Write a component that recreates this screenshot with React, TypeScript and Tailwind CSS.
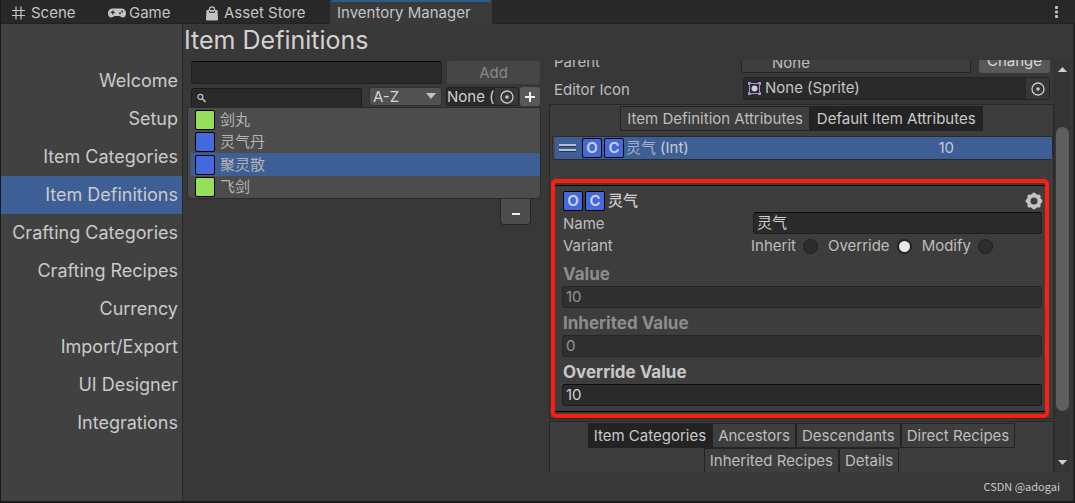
import { useState } from "react";

const menuItems = [
    "Welcome",
    "Setup",
    "Item Categories",
    "Item Definitions",
    "Crafting Categories",
    "Crafting Recipes",
    "Currency",
    "Import/Export",
    "UI Designer",
    "Integrations",
];

const items = [
    { name: "剑丸", color: "bg-[#95df5b]" },
    { name: "灵气丹", color: "bg-[#4369dc]" },
    { name: "聚灵散", color: "bg-[#4369dc]" },
    { name: "飞剑", color: "bg-[#95df5b]" },
];

const variants = ["Inherit", "Override", "Modify"];

function PickerIcon() {
    return (
        <svg width="14" height="14" viewBox="0 0 14 14" fill="none" className="shrink-0">
            <circle cx="7" cy="7" r="6" stroke="#c8c8c8" strokeWidth="1.3" />
            <circle cx="7" cy="7" r="1.8" fill="#c8c8c8" />
        </svg>
    );
}

function GearIcon() {
    return (
        <svg width="18" height="18" viewBox="0 0 18 18" fill="#c4c4c4">
            <circle cx="9" cy="9" r="5.4" fill="none" stroke="#c4c4c4" strokeWidth="3.8" />
            <circle cx="9" cy="2.4" r="1.9" />
            <circle cx="13.7" cy="4.3" r="1.9" />
            <circle cx="15.6" cy="9" r="1.9" />
            <circle cx="13.7" cy="13.7" r="1.9" />
            <circle cx="9" cy="15.6" r="1.9" />
            <circle cx="4.3" cy="13.7" r="1.9" />
            <circle cx="2.4" cy="9" r="1.9" />
            <circle cx="4.3" cy="4.3" r="1.9" />
        </svg>
    );
}

function Badge({ letter }: { letter: string }) {
    return (
        <span className="flex h-5 w-5 shrink-0 items-center justify-center rounded-[2px] border border-black bg-[#4369dc] text-[15px] font-semibold text-[#d0d4e4]">
            {letter}
        </span>
    );
}

function SectionTab({ label, active, wide }: { label: string; active?: boolean; wide?: boolean }) {
    return (
        <button
            className={`h-[25px] border border-[#232323] text-[15px] leading-5 whitespace-nowrap ${wide ? "px-[6px]" : "px-[5px]"} ${active ? "bg-[#232323] text-[#cacaca]" : "bg-[#3e3e3e] text-[#bdbdbd]"}`}
        >
            {label}
        </button>
    );
}

function ValueField({ id, label, value, disabled }: { id: string; label: string; value: string; disabled?: boolean }) {
    return (
        <div className="flex flex-col">
            <label htmlFor={id} className={`flex h-[27px] items-end pl-px text-[17px] leading-6 font-bold ${disabled ? "text-[#8e8e8e]" : "text-[#c8c8c8]"}`}>
                {label}
            </label>
            <input
                id={id}
                defaultValue={value}
                disabled={disabled}
                className={`h-[22px] w-full rounded-[3px] border px-[3px] pt-px text-[15px] ${disabled ? "border-[#252525] bg-[#303030] text-[#949494]" : "border-[#1c1c1c] border-t-[#0d0d0d] bg-[#2a2a2a] text-[#d0d0d0]"}`}
            />
        </div>
    );
}

function TabBar() {
    return (
        <div className="flex h-6 shrink-0 items-stretch border-b border-[#222] bg-[#282828] text-[15px] text-[#c4c4c4]">
            <button className="flex w-[95px] items-center gap-[6px] pt-[3px] pl-[11px]">
                <svg width="13" height="14" viewBox="0 0 13 14" fill="none" stroke="#c4c4c4" strokeWidth="1.2">
                    <path d="M4 0.5v13M9 0.5v13M0 4.5h13M0 9.5h13" />
                </svg>
                Scene
            </button>
            <button className="flex w-[98px] items-center gap-[3px] pt-[3px] pl-3">
                <svg width="18" height="10" viewBox="0 0 18 10">
                    <path d="M5 0.5C2 0.5 0 2.6 0 5.2C0 8 1.5 9.6 3.2 9.6C5 9.6 5.7 8 6.8 8h4.4c1.1 0 1.8 1.6 3.6 1.6C16.5 9.6 18 8 18 5.2C18 2.6 16 0.5 13 0.5z" fill="#c4c4c4" />
                    <path d="M4.8 2.4v4M2.8 4.4h4" stroke="#282828" strokeWidth="1.2" />
                    <circle cx="12" cy="5.2" r="1" fill="#282828" />
                    <circle cx="14.2" cy="3.4" r="1" fill="#282828" />
                </svg>
                Game
            </button>
            <button className="flex w-[136px] items-center gap-[6px] pt-[3px] pl-3">
                <svg width="12" height="15" viewBox="0 0 12 15">
                    <path d="M3.5 6V3a2.5 2.2 0 0 1 5 0v3" fill="none" stroke="#c4c4c4" strokeWidth="1.3" />
                    <path d="M0.5 4h11l0.5 9.5q0 1-1 1H1q-1 0-1-1z" fill="#c4c4c4" />
                    <path d="M3.5 5v1.300h5V5" fill="none" stroke="#282828" />
                </svg>
                Asset Store
            </button>
            <button className="-mb-px flex w-[162px] items-center rounded-t-[3px] border-t-2 border-[#2c5d87] bg-[#3a3a3a] pl-[7px]">
                Inventory Manager
            </button>
            <button aria-label="Window menu" className="mr-4 ml-auto">
                <svg width="5" height="14" viewBox="0 0 5 14" fill="#c4c4c4">
                    <rect x="1" y="1" width="3" height="3" rx="1" />
                    <rect x="1" y="5.5" width="3" height="3" rx="1" />
                    <rect x="1" y="10" width="3" height="3" rx="1" />
                </svg>
            </button>
        </div>
    );
}

function DefinitionList({ selected, onSelect }: { selected: string; onSelect: (name: string) => void }) {
    return (
        <div className="flex w-[366px] shrink-0 flex-col pt-px pr-2 pl-1">
            <div className="flex gap-[5px] pr-px pl-1">
                <input aria-label="New item name" className="h-[23px] min-w-0 flex-1 rounded-[3px] border border-[#1f1f1f] border-t-[#0d0d0d] bg-[#2a2a2a] px-1 text-[15px] text-[#d0d0d0]" />
                <button className="h-[23px] w-[93px] rounded-[3px] bg-[#464646] pt-px text-[15px] text-[#8a8a8a]">Add</button>
            </div>
            <div className="mt-[3px] flex h-5 items-start pr-px pl-1">
                <label className="mt-px flex h-[19px] min-w-0 flex-1 items-center rounded-t-[3px] border border-b-0 border-[#1c1c1c] bg-[#2a2a2a] pl-[5px]">
                    <svg width="10" height="10" viewBox="0 0 10 10" fill="none" stroke="#c4c4c4">
                        <circle cx="3.7" cy="3.7" r="2.7" strokeWidth="1.3" />
                        <path d="M5.8 5.8L9.3 9.3" strokeWidth="1.7" />
                    </svg>
                    <input aria-label="Search items" className="ml-1 h-4 w-full min-w-0 bg-transparent text-[13px] text-[#d0d0d0] outline-none" />
                </label>
                <div className="relative ml-[7px] flex h-[19px] w-[73px]">
                    <select aria-label="Sort order" className="block h-[19px] w-full appearance-none rounded-[3px] border border-[#303030] bg-[#515151] py-0 pl-[3px] text-[15px] leading-[17px] text-[#d6d6d6]">
                        <option>A-Z</option>
                        <option>Z-A</option>
                    </select>
                    <svg width="10" height="6" viewBox="0 0 10 6" fill="#c4c4c4" className="pointer-events-none absolute top-[6px] right-[6px]">
                        <path d="M0 0h10L5 6z" />
                    </svg>
                </div>
                <button className="ml-1 flex h-[19px] w-[73px] items-center overflow-hidden rounded-[3px] border border-[#222] bg-[#2a2a2a] text-[15px] whitespace-nowrap text-[#d0d0d0]">
                    <span className="w-12 shrink-0 overflow-hidden pt-px text-left">None (</span>
                    <span className="flex h-full flex-1 items-center justify-center bg-[#373737]">
                        <PickerIcon />
                    </span>
                </button>
                <button aria-label="Add filter" className="ml-px flex h-[19px] w-[20px] items-center justify-center rounded-[3px] bg-[#585858]">
                    <svg width="10" height="10" viewBox="0 0 10 10" stroke="#eee" strokeWidth="2">
                        <path d="M5 0v10M0 5h10" />
                    </svg>
                </button>
            </div>
            <ul className="flex flex-col rounded-b-[4px] border border-[#2a2a2a] bg-[#4c4c4c] pt-px pl-[3px]">
                {items.map((item) => (
                    <li key={item.name}>
                        <button
                            onClick={() => onSelect(item.name)}
                            className={`flex w-full items-center gap-[5px] pl-1 text-[15px] leading-[22px] text-[#b4b4b4] ${item.name === selected ? "h-[23px] bg-[#3e5f96]" : "h-[22px]"}`}
                        >
                            <span className={`h-5 w-5 rounded-[2px] border border-black ${item.color}`} />
                            {item.name}
                        </button>
                    </li>
                ))}
            </ul>
            <button aria-label="Remove item" className="mr-[10px] flex h-[26px] w-[31px] items-center justify-center self-end rounded-b-[4px] border border-t-0 border-[#262626] bg-[#4c4c4c] pt-1">
                <span className="h-[2px] w-2 bg-[#eee]" />
            </button>
        </div>
    );
}

function AttributeEditor() {
    const [variant, setVariant] = useState("Override");
    return (
        <div className="mt-[19px] mr-1 ml-px rounded-[5px] border-4 border-[#ff1d10] py-[2px]">
            <div className="flex flex-col border-y border-black pt-1 pr-[3px] pb-[5px] pl-[7px]">
                <div className="flex h-[22px] items-center gap-[2px] pl-px">
                    <Badge letter="O" />
                    <Badge letter="C" />
                    <span className="pl-px text-[15px] font-medium text-[#d0d0d0]">灵气</span>
                    <button aria-label="Attribute options" className="-mr-px ml-auto">
                        <GearIcon />
                    </button>
                </div>
                <div className="flex h-[22px] items-center">
                    <label htmlFor="attribute-name" className="w-[191px] pt-[2px] pl-px text-[15px] leading-5">Name</label>
                    <input id="attribute-name" defaultValue="灵气" className="h-[22px] min-w-0 flex-1 rounded-[3px] border border-[#1f1f1f] border-t-[#0d0d0d] bg-[#2a2a2a] px-[3px] text-[15px] text-[#d0d0d0]" />
                </div>
                <fieldset className="flex h-[22px] items-center">
                    <legend className="float-left w-[189px] pl-px text-[15px] leading-5">Variant</legend>
                    {variants.map((name) => (
                        <label key={name} className="mr-[10px] flex items-center gap-[7px] pt-px text-[15px]">
                            {name}
                            <input
                                type="radio"
                                name="variant"
                                checked={variant === name}
                                onChange={() => setVariant(name)}
                                className="h-[15px] w-[15px] appearance-none rounded-full border border-[#1c2024] bg-[#2b2d2f] checked:border-2 checked:border-[#222] checked:bg-[#e8e8e8]"
                            />
                        </label>
                    ))}
                </fieldset>
                <div className="mt-[3px] flex flex-col">
                    <ValueField id="value" label="Value" value="10" disabled />
                    <ValueField id="inherited-value" label="Inherited Value" value="0" disabled />
                    <ValueField id="override-value" label="Override Value" value="10" />
                </div>
            </div>
        </div>
    );
}

function Details() {
    return (
        <div className="flex min-w-0 flex-1 flex-col overflow-hidden text-[#bdbdbd]">
            <div className="-mt-[10px] flex h-[23px] shrink-0 items-center pl-[5px] text-[15px]">
                <span className="w-[187px] leading-[22px]">Parent</span>
                <span className="h-[22px] min-w-0 flex-1 border border-[#262626] bg-[#3e3e3e] pl-[30px] leading-[22px]">None</span>
                <button className="mr-1 ml-2 h-[23px] w-[71px] rounded-[3px] bg-[#585858] text-[#d8d8d8]">Change</button>
            </div>
            <div className="mt-1 mr-1 flex h-[23px] shrink-0 items-center pl-[5px] text-[15px]">
                <span className="w-[189px] pt-[3px]">Editor Icon</span>
                <button className="flex h-[23px] min-w-0 flex-1 items-center rounded-[3px] border border-[#222] bg-[#2a2a2a] pl-1 text-[#c4c4c4]">
                    <svg width="13" height="13" viewBox="0 0 13 13">
                        <path d="M1.5 1.5h10v10h-10z" fill="none" stroke="#a98ce8" />
                        <path d="M0 0h3v2H2v1H0zM10 0h3v3h-2V2h-1zM0 10h2v1h1v2H0zM11 10h2v3h-3v-2h1z" fill="#a98ce8" />
                        <circle cx="6.5" cy="6.5" r="3" fill="#d0d0d0" />
                    </svg>
                    <span className="pl-1">None (Sprite)</span>
                    <span className="ml-auto flex h-full w-[23px] items-center justify-center bg-[#373737]">
                        <PickerIcon />
                    </span>
                </button>
            </div>
            <section className="mt-1 flex shrink-0 flex-col border border-[#282828] bg-[#3d3d3d] pt-px">
                <div className="flex justify-center">
                    <SectionTab label="Item Definition Attributes" wide />
                    <SectionTab label="Default Item Attributes" active wide />
                </div>
                <div className="mt-[5px] ml-[2px] flex h-6 items-center rounded-b-[3px] border border-[#2a2a2a] bg-[#4c4c4c] pl-[2px]">
                    <div className="flex h-full flex-1 items-center gap-[2px] bg-[#3e5f96] pl-1 text-[15px] text-[#c8ccd4]">
                        <svg width="17" height="8" viewBox="0 0 17 8">
                            <path d="M0 1h17M0 6h17" stroke="#dce0e8" strokeWidth="1.5" />
                            <path d="M0 2.5h17M0 7.5h17" stroke="#26364f" />
                        </svg>
                        <span className="flex gap-[2px] pl-1">
                            <Badge letter="O" />
                            <Badge letter="C" />
                        </span>
                        <span className="text-[#a4b0c8]">灵气</span>
                        <span className="pl-[2px]">(Int)</span>
                        <span className="mr-[98px] ml-auto">10</span>
                    </div>
                </div>
                <AttributeEditor />
            </section>
            <section className="mt-[2px] flex shrink-0 flex-col items-center border border-b-0 border-[#282828] bg-[#3d3d3d] pt-px">
                <div className="flex">
                    <SectionTab label="Item Categories" active />
                    <SectionTab label="Ancestors" />
                    <SectionTab label="Descendants" />
                    <SectionTab label="Direct Recipes" />
                </div>
                <div className="flex">
                    <SectionTab label="Inherited Recipes" />
                    <SectionTab label="Details" />
                </div>
            </section>
        </div>
    );
}

function ScrollTrack() {
    return (
        <div className="flex w-4 shrink-0 flex-col items-center border-l border-[#303030] bg-[#353535]">
            <button aria-label="Scroll up" className="pt-[7px] pb-[55px]">
                <svg width="9" height="5" viewBox="0 0 9 5" fill="#d0d0d0">
                    <path d="M0 5h9L4.5 0z" />
                </svg>
            </button>
            <div className="w-[13px] flex-1 rounded-full bg-[#5f5f5f]" />
            <button aria-label="Scroll down" className="pt-[49px] pb-[7px]">
                <svg width="9" height="5" viewBox="0 0 9 5" fill="#d0d0d0">
                    <path d="M0 0h9L4.5 5z" />
                </svg>
            </button>
        </div>
    );
}

export default function App() {
    const [page, setPage] = useState("Item Definitions");
    const [selected, setSelected] = useState("聚灵散");

    return (
        <div className="flex h-screen flex-col border-b-2 border-l border-[#1a1a1a] bg-[#383838] font-['Inter','Noto_Sans_CJK_SC',sans-serif] text-[#c4c4c4]">
            <TabBar />
            <div className="flex min-h-0 flex-1 border-r-2 border-[#222]">
                <nav className="flex w-[182px] shrink-0 flex-col border-r border-[#282828] bg-[#414141] pt-[38px]">
                    {menuItems.map((item) => (
                        <button
                            key={item}
                            onClick={() => setPage(item)}
                            className={`h-[38px] pr-1 text-right text-[18px] leading-7 text-[#cacaca] ${item === page ? "bg-[#3e5f96]" : ""}`}
                        >
                            {item}
                        </button>
                    ))}
                </nav>
                <main className="flex min-w-0 flex-1 flex-col">
                    <h1 className="h-9 shrink-0 pl-px text-[25px] leading-8 text-[#d2d2d2]">{page}</h1>
                    <div className="flex min-h-0 flex-1 pr-[3px]">
                        <DefinitionList selected={selected} onSelect={setSelected} />
                        <Details />
                        <ScrollTrack />
                    </div>
                    <footer className="flex h-[29px] shrink-0 items-center justify-end pr-[13px] font-['Noto_Sans_CJK_SC',sans-serif] text-[11px] text-[#c8c8c8]">
                        CSDN @adogai
                    </footer>
                </main>
            </div>
        </div>
    );
}
